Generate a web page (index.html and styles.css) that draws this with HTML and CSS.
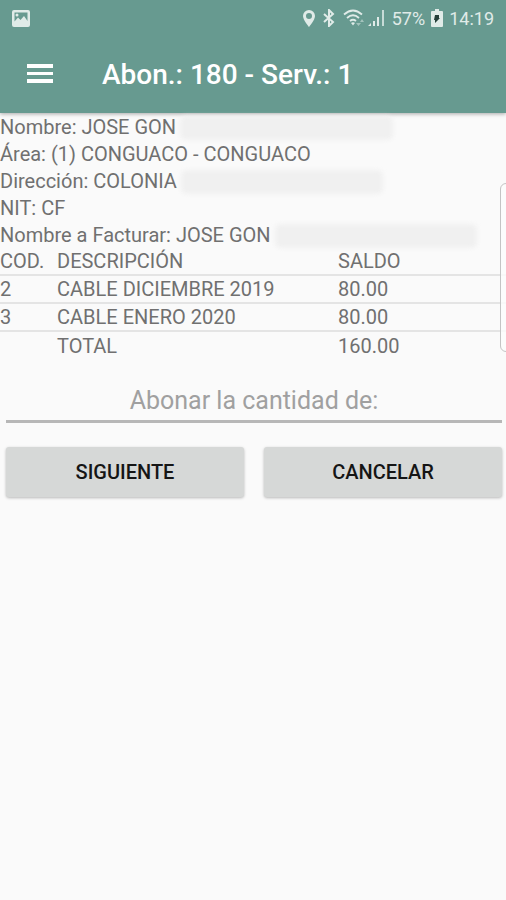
FILE: index.html
```html
<!DOCTYPE html>
<html lang="es">
<head>
<meta charset="utf-8">
<meta name="viewport" content="width=device-width, initial-scale=1">
<title>Abon.: 180 - Serv.: 1</title>
<link rel="stylesheet" href="styles.css">
</head>
<body>
<header class="top">
  <div class="status">
    <svg class="status-picture" width="18" height="17" viewBox="0 0 18 17"><path fill="currentColor" fill-rule="evenodd" d="M2 0h14q2 0 2 2v13q0 2-2 2H2q-2 0-2-2V2Q0 0 2 0zM2.500 2.500v9l3.500-4 2.500 2.500 3.500-4 3.500 5v-8.500zM5 3.500a1.500 1.500 0 1 1 0 3 1.500 1.500 0 0 1 0-3z"/></svg>
    <svg width="12" height="17" viewBox="0 0 12 17"><path fill="currentColor" fill-rule="evenodd" d="M6 0a6 6 0 0 1 6 6c0 4-6 11-6 11S0 10 0 6a6 6 0 0 1 6-6zm0 3a3 3 0 1 0 0 6 3 3 0 0 0 0-6z"/></svg>
    <svg width="12" height="18" viewBox="0 0 12 18" fill="none" stroke="currentColor" stroke-width="2"><path d="M1 5l9 8-4 4V1l4 4-9 8"/></svg>
    <svg class="status-wifi" width="22" height="18" viewBox="0 0 22 18"><g fill="none" stroke="currentColor" stroke-width="1.800"><path d="M1 5.500q9-8 18 0M4 9q6-5.500 12 0M7 12q3-2.500 6 0"/></g><path fill="currentColor" d="M8 14q2-1.500 4 0l-2 2.500z"/><path fill="currentColor" opacity=".5" d="M13 14h5l-2.500 3zM17 13l2-3 2 3z"/></svg>
    <svg class="status-signal" width="17" height="18" viewBox="0 0 17 18" fill="currentColor"><path d="M0 17l3-3v3zM5 12h2v5H5zM9 8h2v9H9z"/><path opacity=".8" d="M14 1h2v16h-2z"/></svg>
    <span>57%</span>
    <svg width="12" height="18" viewBox="0 0 12 18"><path fill="currentColor" d="M4 0h4v2h3q1 0 1 1v14q0 1-1 1H1q-1 0-1-1V3q0-1 1-1h3z"/><path fill="#243f39" d="M4 6h4v3h1l-5 5v-3H3z"/></svg>
    <time>14:19</time>
  </div>
  <div class="bar">
    <button class="menu" type="button" aria-label="Menú"><svg width="28" height="22" viewBox="0 0 28 22" fill="currentColor"><path d="M1 0h26v4H1zM1 8h26v3H1zM1 15h26v4H1z"/></svg></button>
    <h1>Abon.: 180 - Serv.: 1</h1>
  </div>
</header>
<main>
  <section class="details">
    <p>Nombre: JOSE GON<span class="redacted redacted-name"></span></p>
    <p>Área: (1) CONGUACO - CONGUACO</p>
    <p>Dirección: COLONIA<span class="redacted redacted-address"></span></p>
    <p>NIT: CF</p>
    <p>Nombre a Facturar: JOSE GON<span class="redacted redacted-billing"></span></p>
  </section>
  <table>
    <thead><tr><th class="code" scope="col">COD.</th><th class="description" scope="col">DESCRIPCIÓN</th><th scope="col">SALDO</th></tr></thead>
    <tbody>
      <tr><td>2</td><td>CABLE DICIEMBRE 2019</td><td>80.00</td></tr>
      <tr><td>3</td><td>CABLE ENERO 2020</td><td>80.00</td></tr>
    </tbody>
    <tfoot><tr><td></td><td>TOTAL</td><td>160.00</td></tr></tfoot>
  </table>
  <form>
    <input type="text" inputmode="decimal" aria-label="Abonar la cantidad de" placeholder="Abonar la cantidad de:">
    <div class="actions">
      <button type="button">SIGUIENTE</button>
      <button type="button">CANCELAR</button>
    </div>
  </form>
</main>
<aside class="edge-handle" aria-hidden="true"></aside>
</body>
</html>
```

FILE: styles.css
```css
* { box-sizing: border-box; }

body {
  margin: 0;
  min-height: 100vh;
  overflow-x: hidden;
  background: #fafafa;
  color: #707070;
  font: 20px/27px Roboto, "Liberation Sans", sans-serif;
}

.top {
  position: relative;
  background: #679a90;
  color: #fff;
  box-shadow: 0 1px 4px #0005;
}

.status {
  display: flex;
  align-items: center;
  gap: 8px;
  height: 36px;
  padding: 0 12px;
  color: #e0ebe8;
  font-size: 18px;
}

.status svg { flex: none; }
.status-picture { margin-right: auto; }
.status-signal { margin: 0 -1px 0 -5px; }
.status time { margin-left: -2px; }
.status span { margin-right: -2px; }

.bar {
  display: flex;
  align-items: center;
  gap: 48px;
  height: 77px;
  padding: 0 26px;
}

.menu {
  display: flex;
  padding: 0;
  border: 0;
  background: none;
  color: inherit;
}

h1 {
  margin: 0;
  font-size: 28px;
  font-weight: 500;
  line-height: 32px;
}

.details { padding-top: 1px; }

p {
  display: flex;
  align-items: center;
  margin: 0;
}

.redacted {
  height: 24px;
  margin-left: 4px;
  border-radius: 6px;
  background: #f0f0f0;
  filter: blur(2px);
}

.redacted-name { width: 42%; }
.redacted-address { width: 40%; }
.redacted-billing { width: 40%; }

table {
  width: 100%;
  border-collapse: collapse;
  table-layout: fixed;
}

th, td {
  height: 28px;
  padding: 0;
  font-weight: 400;
  line-height: 26px;
  text-align: left;
}

th { height: 26px; line-height: 25px; }
tbody tr { border-top: 2px solid #e4e4e4; }
tfoot tr { border-top: 2px solid #e4e4e4; }
.code { width: 57px; }
.description { width: 281px; }

form { padding: 22px 4px 0 6px; }

input {
  display: block;
  width: 100%;
  height: 42px;
  padding: 0;
  border: 0;
  border-bottom: 3px solid #b7b7b7;
  background: none;
  color: #555;
  font: 25px/32px Roboto, "Liberation Sans", sans-serif;
  text-align: center;
}

input::placeholder { color: #a0a0a0; opacity: 1; }

.actions {
  display: grid;
  grid-template-columns: 1fr 1fr;
  gap: 20px;
  padding-top: 24px;
}

.actions button {
  height: 50px;
  padding: 0;
  border: 0;
  border-radius: 3px;
  background: #d6d8d7;
  box-shadow: 0 1px 3px #0004;
  color: #151515;
  font: 500 20px/24px Roboto, "Liberation Sans", sans-serif;
}

.edge-handle {
  position: absolute;
  top: 183px;
  right: -12px;
  width: 18px;
  height: 169px;
  border: 1px solid #c4c4c4;
  border-radius: 6px;
  background: #fdfdfdcc;
}
```
